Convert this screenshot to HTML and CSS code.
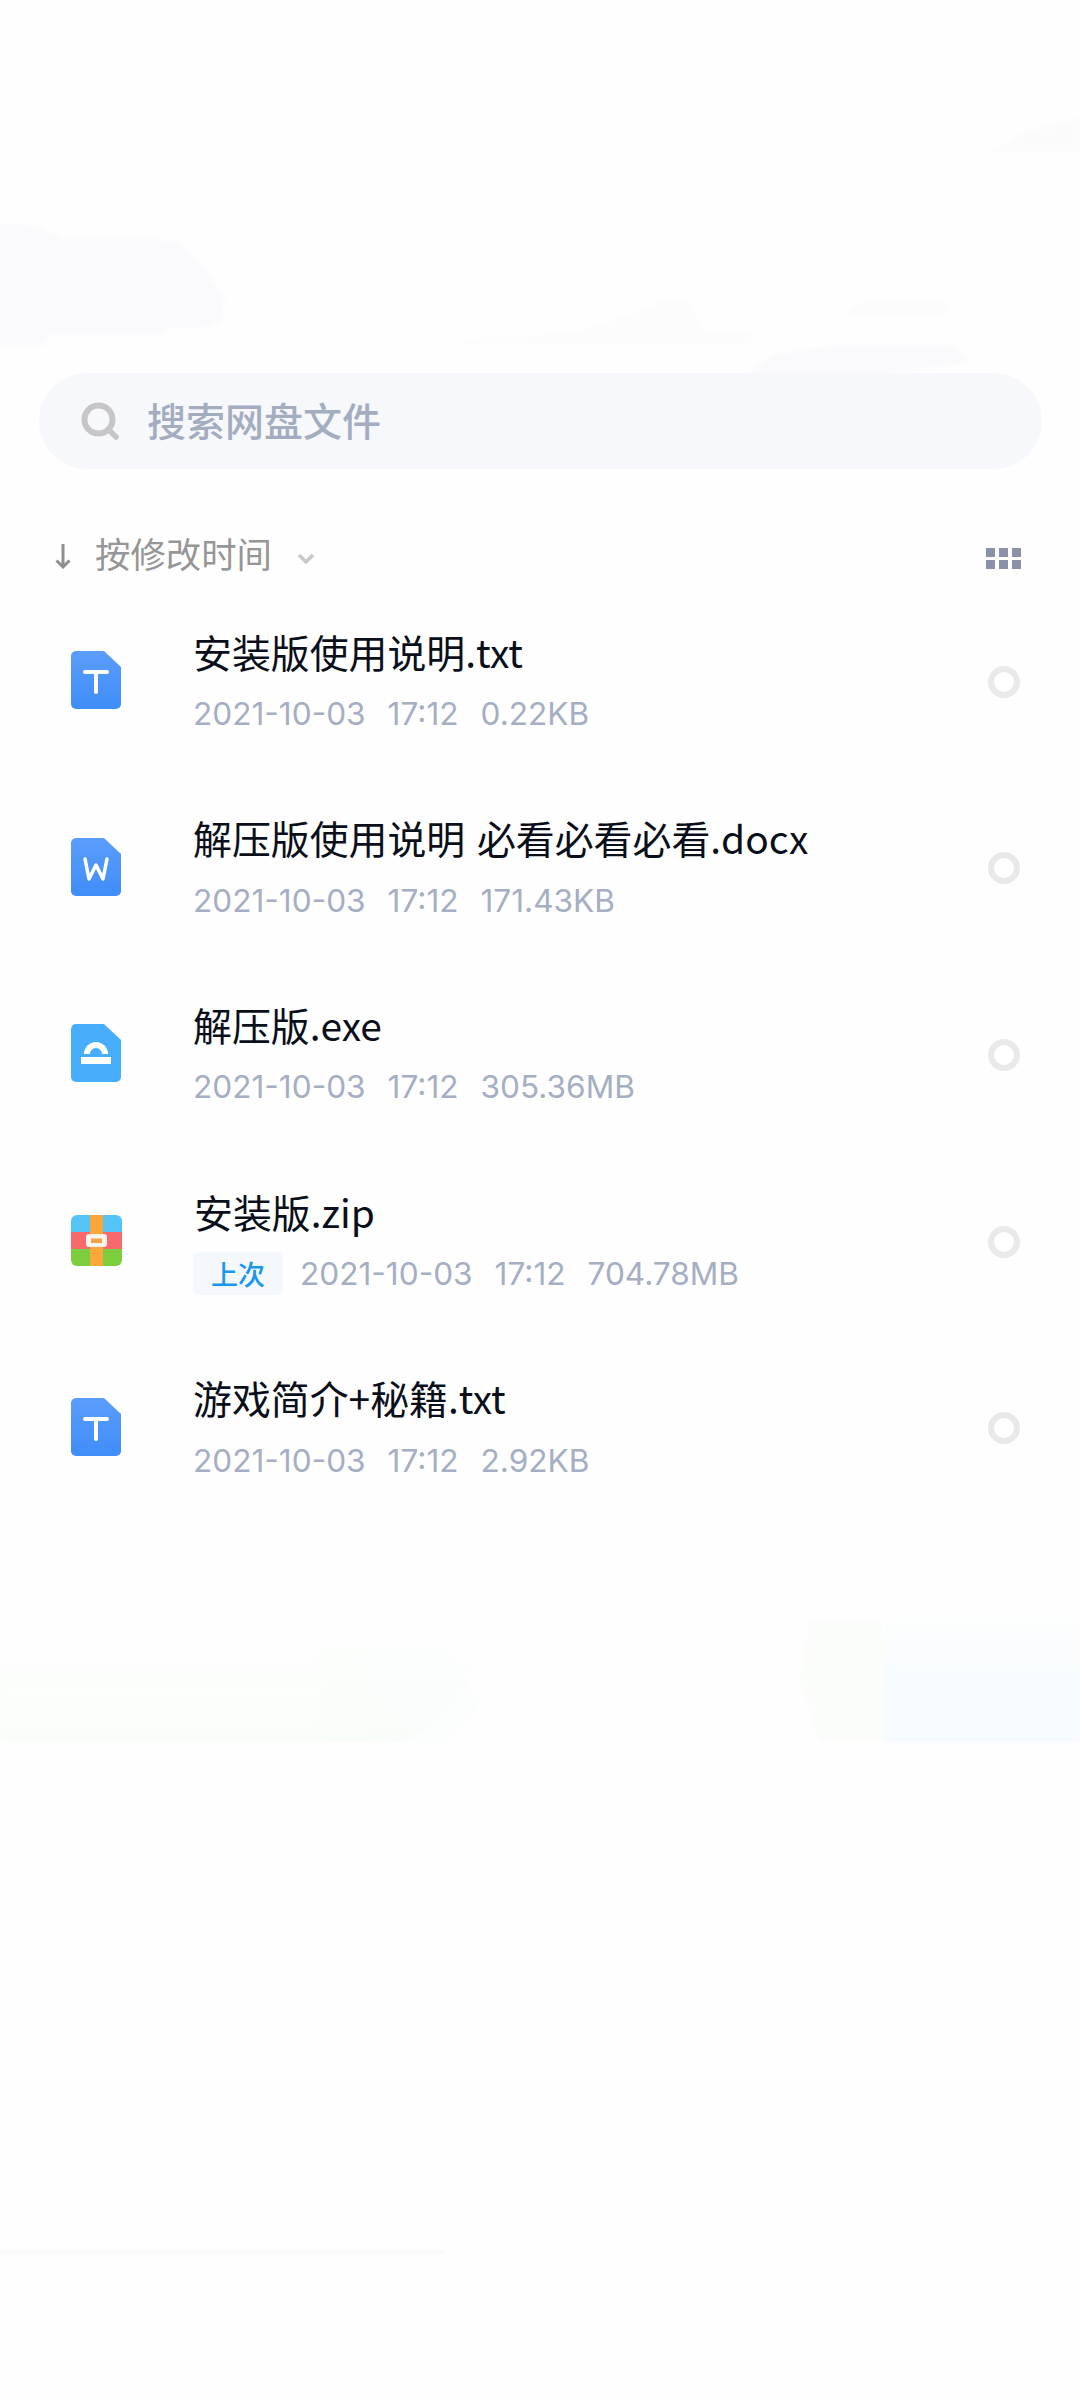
FILE: index.html
```html
<!DOCTYPE html>
<html lang="zh">
<head>
<meta charset="utf-8">
<title>网盘文件</title>
<link rel="stylesheet" href="styles.css">
</head>
<body>
<main class="page">
  <svg class="backdrop" width="1080" height="2400" viewBox="0 0 1080 2400" aria-hidden="true">
    <defs>
      <linearGradient id="gl" x1="0" y1="0" x2="0" y2="1"><stop offset="0" stop-color="#fbfffb" stop-opacity="0"/><stop offset="1" stop-color="#f8fdf8"/></linearGradient>
      <linearGradient id="gm" x1="0" y1="0" x2="1" y2="0"><stop offset="0" stop-color="#f9fdf9"/><stop offset="1" stop-color="#f8fcfb"/></linearGradient>
      <linearGradient id="gr" x1="0" y1="0" x2="0" y2="1"><stop offset="0" stop-color="#f6fcff" stop-opacity="0"/><stop offset="0.5" stop-color="#f5fbff"/><stop offset="1" stop-color="#f4fbff"/></linearGradient>
      <clipPath id="bandclip"><rect x="0" y="1560" width="1080" height="182"/></clipPath>
    </defs>
    <path d="M0 224H30L62 238H148L180 243L205 268L225 300L222 320L205 328H165V335H50L45 345H0Z" fill="#fafafd"/>
    <path d="M430 345L580 330L640 312L660 303H640L680 300L690 305L705 332H750V345Z" fill="#fcfcfd"/>
    <path d="M750 372L772 355L840 345H955L970 362L930 368L860 378L770 395Z" fill="#fafafc"/>
    <path d="M990 152L1030 130L1080 118V152Z" fill="#fbfbfb"/>
    <path d="M845 314L860 302H945L950 314Z" fill="#fcfcfc"/>
    <g clip-path="url(#bandclip)">
      <path d="M0 1610H490L480 1650L450 1710L380 1760H0Z" fill="url(#gl)"/>
      <path d="M320 1650H440L480 1700L450 1740L370 1760H320Z" fill="url(#gm)" opacity="0.7"/>
      <path d="M810 1620H880L900 1690L890 1760H825L800 1680Z" fill="#fbfdfa"/>
      <path d="M885 1610H1080V1760H885Z" fill="url(#gr)"/>
    </g>
    <path d="M0 2252H445" stroke="#f5f5f8" stroke-width="1.500" fill="none"/>
  </svg>

  <div class="search">
    <svg class="search-icon" width="38" height="38" viewBox="0 0 38 38"><circle cx="17.500" cy="17.500" r="14" fill="none" stroke="#c6c6c8" stroke-width="6"/><path d="M29 29L35 35" stroke="#c6c6c8" stroke-width="5.500" stroke-linecap="round"/></svg>
    <span class="search-text">搜索网盘文件</span>
  </div>

  <div class="sort">
    <svg class="sort-arrow" width="16" height="26" viewBox="0 0 16 26"><path d="M8 1V24M1.500 17.500L8 24L14.500 17.500" fill="none" stroke="#8f8f8f" stroke-width="3"/></svg>
    <span class="sort-text">按修改时间</span>
    <svg class="sort-chevron" width="18" height="11" viewBox="0 0 18 11"><path d="M2 2L9 9L16 2" fill="none" stroke="#c8c8c8" stroke-width="3.500"/></svg>
    <div class="grid-toggle"><i></i><i></i><i></i><i></i><i></i><i></i></div>
  </div>

  <ul class="files">
    <li class="file">
      <svg class="ficon" width="50" height="58" viewBox="0 0 50 58"><defs><linearGradient id="b1" x1="0" y1="0" x2="0" y2="1"><stop offset="0" stop-color="#5b9dfb"/><stop offset="1" stop-color="#3f8df8"/></linearGradient></defs><path d="M5 0H33L50 16V53A5 5 0 0 1 45 58H5A5 5 0 0 1 0 53V5A5 5 0 0 1 5 0Z" fill="url(#b1)"/><path d="M14 21H36M25 21V41" fill="none" stroke="#fff" stroke-width="4" stroke-linecap="round"/></svg>
      <div class="info">
        <div class="name">安装版使用说明.txt</div>
        <div class="meta"><span>2021-10-03</span><span>17:12</span><span>0.22KB</span></div>
      </div>
      <span class="radio"></span>
    </li>
    <li class="file">
      <svg class="ficon" width="50" height="58" viewBox="0 0 50 58"><path d="M5 0H33L50 16V53A5 5 0 0 1 45 58H5A5 5 0 0 1 0 53V5A5 5 0 0 1 5 0Z" fill="url(#b1)"/><path d="M14 21L18 41L25 27L32 41L36 21" fill="none" stroke="#fff" stroke-width="3.500" stroke-linecap="round" stroke-linejoin="round"/></svg>
      <div class="info">
        <div class="name">解压版使用说明 必看必看必看.docx</div>
        <div class="meta"><span>2021-10-03</span><span>17:12</span><span>171.43KB</span></div>
      </div>
      <span class="radio"></span>
    </li>
    <li class="file">
      <svg class="ficon" width="50" height="58" viewBox="0 0 50 58"><path d="M5 0H33L50 16V53A5 5 0 0 1 45 58H5A5 5 0 0 1 0 53V5A5 5 0 0 1 5 0Z" fill="#47adfd"/><path d="M13 30A12 12 0 0 1 37 30H31A6 6 0 0 0 19 30Z" fill="#fff"/><rect x="10" y="33" width="30" height="7" fill="#fff"/></svg>
      <div class="info">
        <div class="name">解压版.exe</div>
        <div class="meta"><span>2021-10-03</span><span>17:12</span><span>305.36MB</span></div>
      </div>
      <span class="radio"></span>
    </li>
    <li class="file">
      <svg class="ficon" width="51" height="51" viewBox="0 0 51 51"><defs><clipPath id="zc"><rect width="51" height="51" rx="6"/></clipPath></defs><g clip-path="url(#zc)"><rect width="51" height="17" fill="#54c3f5"/><rect y="17" width="51" height="17" fill="#f7696a"/><rect y="34" width="51" height="17" fill="#7dce3e"/><rect x="19" width="13" height="51" fill="#fca73a"/><rect x="15" y="19" width="21" height="13" rx="3" fill="#fdf3ea"/><rect x="20" y="23.500" width="11" height="4.500" fill="#f2a44c"/></g></svg>
      <div class="info">
        <div class="name">安装版.zip</div>
        <div class="meta"><b class="tag">上次</b><span>2021-10-03</span><span>17:12</span><span>704.78MB</span></div>
      </div>
      <span class="radio"></span>
    </li>
    <li class="file">
      <svg class="ficon" width="50" height="58" viewBox="0 0 50 58"><path d="M5 0H33L50 16V53A5 5 0 0 1 45 58H5A5 5 0 0 1 0 53V5A5 5 0 0 1 5 0Z" fill="url(#b1)"/><path d="M14 21H36M25 21V41" fill="none" stroke="#fff" stroke-width="4" stroke-linecap="round"/></svg>
      <div class="info">
        <div class="name">游戏简介+秘籍.txt</div>
        <div class="meta"><span>2021-10-03</span><span>17:12</span><span>2.92KB</span></div>
      </div>
      <span class="radio"></span>
    </li>
  </ul>
</main>
</body>
</html>
```
FILE: styles.css
```css
* { box-sizing: border-box; }
html, body { margin: 0; padding: 0; background: #fff; }
body { font-family: "Noto Sans CJK SC", "Noto Sans", sans-serif; }
.page { position: relative; width: 1080px; height: 2400px; padding-top: 373px; overflow: hidden; background: #fefefe; }
.backdrop { position: absolute; left: 0; top: 0; filter: blur(1.500px); }
.search, .sort, .files { position: relative; }
.search { display: flex; align-items: center; height: 96px; margin: 0 38px 0 39px; padding-left: 42px; border-radius: 48px; background: #f7f8fc; }
.search-icon { flex: none; }
.search-text { margin: 0 0 4px 28px; font-size: 39px; font-weight: 500; line-height: 48px; color: #a4adc0; }
.sort { display: flex; align-items: center; height: 60px; margin-top: 56px; padding: 0 59px 0 55px; }
.sort-arrow { flex: none; margin-top: 1px; }
.sort-text { margin: 0 0 5px 24px; font-size: 35.400px; line-height: 46px; color: #969696; }
.sort-chevron { flex: none; margin: 6px 0 0 25px; }
.grid-toggle { display: grid; grid-template-columns: repeat(3, 9px); grid-auto-rows: 9px; gap: 3px 4px; margin: 6px 0 0 auto; }
.grid-toggle i { background: #8b91a9; }
.files { margin: 2px 0 0; padding: 0; list-style: none; }
.file { display: flex; align-items: center; height: 186.600px; padding: 0 60px 0 71px; }
.ficon { flex: none; }
.info { flex: 1; min-width: 0; margin: -1px 0 0 72px; }
.name { font-size: 38.900px; line-height: 54px; word-spacing: 3px; color: #0b0f1a; white-space: nowrap; }
.meta { display: flex; align-items: center; gap: 22px; height: 44px; margin-top: 14px; font-family: Inter, "Noto Sans", "Noto Sans CJK SC", sans-serif; font-size: 31.600px; color: #a5aec2; white-space: nowrap; }
.tag { display: inline-flex; align-items: center; justify-content: center; width: 90px; height: 43px; border-radius: 6px; margin: 0 -5px 0 -1px; background: #f4f8fd; color: #1a96f0; font-family: "Noto Sans CJK SC", sans-serif; font-size: 27px; font-weight: 500; }
.radio { flex: none; width: 32px; height: 32px; margin-top: 3px; border: 6px solid #e9e9e9; border-radius: 50%; background: #fff; }
```
